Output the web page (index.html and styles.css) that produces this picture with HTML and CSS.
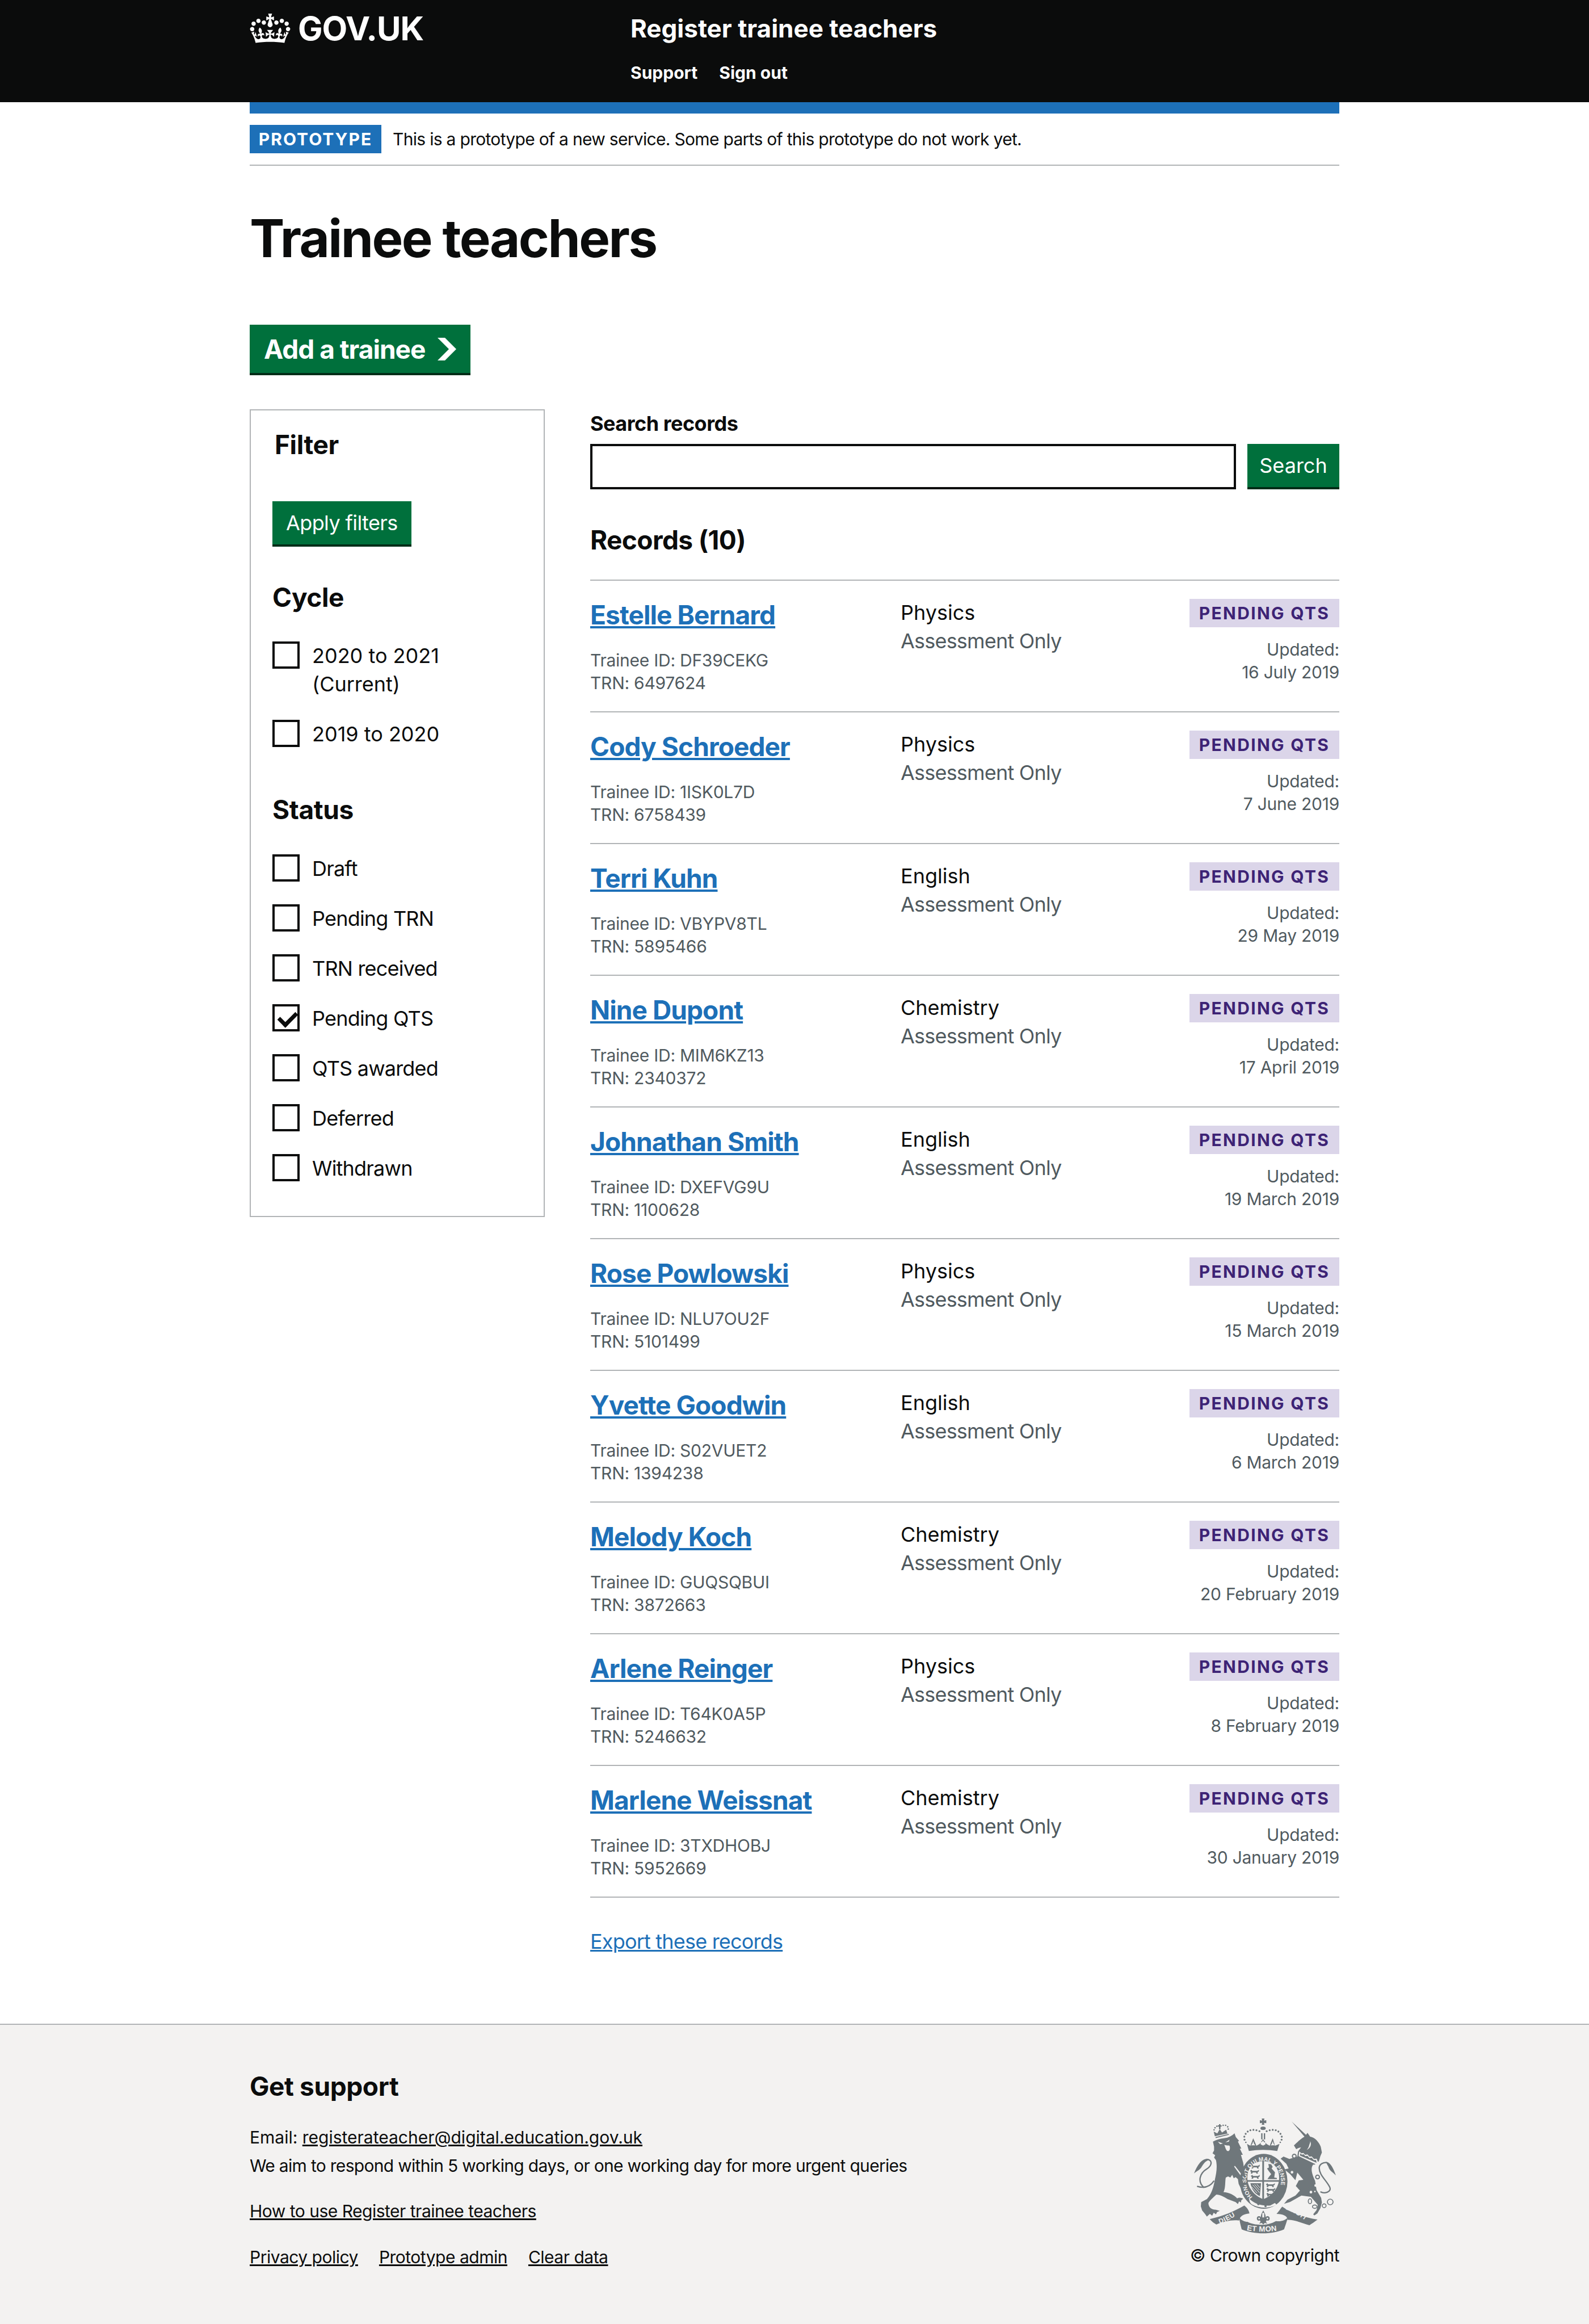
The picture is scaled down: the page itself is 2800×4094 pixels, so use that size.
FILE: index.html
```html
<!DOCTYPE html>
<html lang="en">
<head>
    <meta charset="UTF-8">
    <title>Trainee teachers - Register trainee teachers</title>
    <link rel="stylesheet" href="styles.css">
</head>
<body>
    <header class="header">
        <div class="container header_inner">
            <a class="logo" href="#">
                <svg class="crown" viewBox="0 0 132 97"><path fill="currentColor" fill-rule="evenodd" d="M25 30.2c3.5 1.5 7.7-.2 9.1-3.7 1.5-3.6-.2-7.8-3.9-9.2-3.6-1.4-7.6.3-9.1 3.9-1.4 3.5.3 7.5 3.9 9zM9 39.5c3.6 1.5 7.8-.2 9.2-3.7 1.5-3.6-.2-7.8-3.9-9.1-3.6-1.5-7.6.2-9.1 3.8-1.4 3.5.3 7.5 3.8 9zM4.4 57.2c3.5 1.5 7.7-.2 9.1-3.8 1.5-3.6-.2-7.7-3.9-9.1-3.5-1.5-7.6.3-9.1 3.8-1.4 3.5.3 7.6 3.9 9.1zm38.3-21.4c3.5 1.5 7.7-.2 9.1-3.8 1.5-3.6-.2-7.7-3.9-9.1-3.6-1.5-7.6.3-9.1 3.8-1.3 3.6.4 7.7 3.9 9.1zm64.4-5.6c-3.6 1.5-7.8-.2-9.1-3.7-1.5-3.6.2-7.8 3.8-9.2 3.6-1.4 7.7.3 9.2 3.9 1.3 3.5-.4 7.5-3.9 9zm15.9 9.3c-3.6 1.5-7.7-.2-9.1-3.7-1.5-3.6.2-7.8 3.7-9.1 3.6-1.5 7.7.2 9.2 3.8 1.5 3.5-.3 7.5-3.8 9zm4.7 17.7c-3.6 1.5-7.8-.2-9.2-3.8-1.5-3.6.2-7.7 3.9-9.1 3.6-1.5 7.7.3 9.2 3.8 1.3 3.5-.4 7.6-3.9 9.1zM89.3 35.8c-3.6 1.5-7.8-.2-9.2-3.8-1.4-3.6.2-7.7 3.9-9.1 3.6-1.5 7.7.3 9.2 3.8 1.4 3.6-.3 7.7-3.9 9.1zM69.7 17.7l8.9 4.7V9.3l-8.9 2.8c-.2-.3-.5-.6-.9-.9L72.4 0H59.6l3.5 11.2c-.3.3-.6.5-.9.9l-8.8-2.8v13.1l8.8-4.7c.3.3.6.7.9.9l-5 15.4v.1c-.2.8-.4 1.6-.4 2.4 0 4.1 3.1 7.5 7 8.1h.2c.3 0 .7.1 1 .1.4 0 .7 0 1-.1h.2c4-.6 7.1-4.1 7.1-8.1 0-.8-.1-1.7-.4-2.4V34l-5.1-15.4c.4-.2.7-.6 1-.9zM66 92.8c16.9 0 32.8 1.1 47.1 3.2 4-16.9 8.9-26.7 14-33.5l-9.6-3.4c1 4.9 1.1 7.2 0 10.2-1.5-1.4-3-4.3-4.2-8.7L108.6 76c2.8-2 5-3.2 7.5-3.3-4.4 9.4-10 11.9-13.6 11.2-4.3-.8-6.3-4.6-5.6-7.9 1-4.7 5.7-5.9 8-.5 4.3-8.7-3-11.4-7.6-8.8 7.1-7.2 7.9-13.5 2.1-21.1-8 6.1-8.1 12.3-4.5 20.8-4.7-5.4-12.1-2.5-9.5 6.2 3.4-5.2 7.9-2 7.2 3.1-.6 4.3-6.4 7.8-13.5 7.2-10.3-.9-10.9-8-11.2-13.8 2.5-.5 7.1 1.8 11 7.3L80.2 60c-4.1 4.4-8 5.3-12.3 5.4 1.4-4.4 8-11.6 8-11.6H55.5s6.4 7.2 7.9 11.6c-4.2-.1-8-1-12.3-5.4l1.4 16.4c3.9-5.5 8.5-7.7 10.9-7.3-.3 5.8-.9 12.8-11.1 13.8-7.2.6-12.9-2.9-13.5-7.2-.7-5 3.8-8.3 7.1-3.1 2.7-8.7-4.6-11.6-9.4-6.2 3.7-8.5 3.6-14.7-4.6-20.8-5.8 7.6-5 13.9 2.2 21.1-4.7-2.6-11.9.1-7.7 8.8 2.3-5.5 7.1-4.2 8.1.5.7 3.3-1.3 7.1-5.7 7.9-3.5.7-9-1.8-13.5-11.2 2.5.1 4.7 1.3 7.5 3.3l-4.7-15.4c-1.2 4.4-2.7 7.2-4.3 8.7-1.1-3-.9-5.3 0-10.2l-9.5 3.4c5 6.9 9.9 16.7 14 33.5 14.8-2.1 30.8-3.2 47.7-3.2z"/></svg>
                <span>GOV.UK</span>
            </a>
            <div class="service">
                <a class="service_name" href="#">Register trainee teachers</a>
                <nav class="service_nav">
                    <a href="#">Support</a>
                    <a href="#">Sign out</a>
                </nav>
            </div>
        </div>
    </header>

    <div class="container">
        <div class="blue_bar"></div>
        <div class="phase">
            <strong class="phase_tag">PROTOTYPE</strong>
            <span class="phase_text">This is a prototype of a new service. Some parts of this prototype do not work yet.</span>
        </div>

        <h1 class="title">Trainee teachers</h1>

        <a class="btn btn_start" href="#">Add a trainee
            <svg class="chevron" viewBox="0 0 33 40"><path fill="currentColor" d="M0 0h13l20 20-20 20H0l20-20z"/></svg>
        </a>

        <div class="columns">
            <!-- filter -->
            <aside class="filter">
                <h2 class="filter_title">Filter</h2>
                <a class="btn btn_apply" href="#">Apply filters</a>

                <h3 class="filter_group">Cycle</h3>
                <ul class="checks">
                    <li><span class="box"></span><span class="check_label check_years">2020 to 2021 (Current)</span></li>
                    <li><span class="box"></span><span class="check_label check_years">2019 to 2020</span></li>
                </ul>

                <h3 class="filter_group filter_status">Status</h3>
                <ul class="checks">
                    <li><span class="box"></span><span class="check_label">Draft</span></li>
                    <li><span class="box"></span><span class="check_label">Pending TRN</span></li>
                    <li><span class="box"></span><span class="check_label">TRN received</span></li>
                    <li><span class="box checked"></span><span class="check_label">Pending QTS</span></li>
                    <li><span class="box"></span><span class="check_label">QTS awarded</span></li>
                    <li><span class="box"></span><span class="check_label">Deferred</span></li>
                    <li><span class="box"></span><span class="check_label">Withdrawn</span></li>
                </ul>
            </aside>

            <!-- records -->
            <main class="records">
                <label class="search_label" for="search">Search records</label>
                <div class="search_row">
                    <input class="search_input" id="search" type="text">
                    <a class="btn btn_search" href="#">Search</a>
                </div>
                <h2 class="records_title">Records (10)</h2>

                <div class="record">
                    <div class="record_who">
                        <a class="record_name" href="#">Estelle Bernard</a>
                        <p class="record_ids">Trainee ID: DF39CEKG<br>TRN: 6497624</p>
                    </div>
                    <div class="record_course">Physics<span>Assessment Only</span></div>
                    <div class="record_status">
                        <strong class="tag">PENDING QTS</strong>
                        <p class="record_date">Updated:<br>16 July 2019</p>
                    </div>
                </div>
                <div class="record">
                    <div class="record_who">
                        <a class="record_name" href="#">Cody Schroeder</a>
                        <p class="record_ids">Trainee ID: 1ISK0L7D<br>TRN: 6758439</p>
                    </div>
                    <div class="record_course">Physics<span>Assessment Only</span></div>
                    <div class="record_status">
                        <strong class="tag">PENDING QTS</strong>
                        <p class="record_date">Updated:<br>7 June 2019</p>
                    </div>
                </div>
                <div class="record">
                    <div class="record_who">
                        <a class="record_name" href="#">Terri Kuhn</a>
                        <p class="record_ids">Trainee ID: VBYPV8TL<br>TRN: 5895466</p>
                    </div>
                    <div class="record_course">English<span>Assessment Only</span></div>
                    <div class="record_status">
                        <strong class="tag">PENDING QTS</strong>
                        <p class="record_date">Updated:<br>29 May 2019</p>
                    </div>
                </div>
                <div class="record">
                    <div class="record_who">
                        <a class="record_name" href="#">Nine Dupont</a>
                        <p class="record_ids">Trainee ID: MIM6KZ13<br>TRN: 2340372</p>
                    </div>
                    <div class="record_course">Chemistry<span>Assessment Only</span></div>
                    <div class="record_status">
                        <strong class="tag">PENDING QTS</strong>
                        <p class="record_date">Updated:<br>17 April 2019</p>
                    </div>
                </div>
                <div class="record">
                    <div class="record_who">
                        <a class="record_name" href="#">Johnathan Smith</a>
                        <p class="record_ids">Trainee ID: DXEFVG9U<br>TRN: 1100628</p>
                    </div>
                    <div class="record_course">English<span>Assessment Only</span></div>
                    <div class="record_status">
                        <strong class="tag">PENDING QTS</strong>
                        <p class="record_date">Updated:<br>19 March 2019</p>
                    </div>
                </div>
                <div class="record">
                    <div class="record_who">
                        <a class="record_name" href="#">Rose Powlowski</a>
                        <p class="record_ids">Trainee ID: NLU7OU2F<br>TRN: 5101499</p>
                    </div>
                    <div class="record_course">Physics<span>Assessment Only</span></div>
                    <div class="record_status">
                        <strong class="tag">PENDING QTS</strong>
                        <p class="record_date">Updated:<br>15 March 2019</p>
                    </div>
                </div>
                <div class="record">
                    <div class="record_who">
                        <a class="record_name" href="#">Yvette Goodwin</a>
                        <p class="record_ids">Trainee ID: S02VUET2<br>TRN: 1394238</p>
                    </div>
                    <div class="record_course">English<span>Assessment Only</span></div>
                    <div class="record_status">
                        <strong class="tag">PENDING QTS</strong>
                        <p class="record_date">Updated:<br>6 March 2019</p>
                    </div>
                </div>
                <div class="record">
                    <div class="record_who">
                        <a class="record_name" href="#">Melody Koch</a>
                        <p class="record_ids">Trainee ID: GUQSQBUI<br>TRN: 3872663</p>
                    </div>
                    <div class="record_course">Chemistry<span>Assessment Only</span></div>
                    <div class="record_status">
                        <strong class="tag">PENDING QTS</strong>
                        <p class="record_date">Updated:<br>20 February 2019</p>
                    </div>
                </div>
                <div class="record">
                    <div class="record_who">
                        <a class="record_name" href="#">Arlene Reinger</a>
                        <p class="record_ids">Trainee ID: T64K0A5P<br>TRN: 5246632</p>
                    </div>
                    <div class="record_course">Physics<span>Assessment Only</span></div>
                    <div class="record_status">
                        <strong class="tag">PENDING QTS</strong>
                        <p class="record_date">Updated:<br>8 February 2019</p>
                    </div>
                </div>
                <div class="record">
                    <div class="record_who">
                        <a class="record_name" href="#">Marlene Weissnat</a>
                        <p class="record_ids">Trainee ID: 3TXDHOBJ<br>TRN: 5952669</p>
                    </div>
                    <div class="record_course">Chemistry<span>Assessment Only</span></div>
                    <div class="record_status">
                        <strong class="tag">PENDING QTS</strong>
                        <p class="record_date">Updated:<br>30 January 2019</p>
                    </div>
                </div>

                <a class="export" href="#">Export these records</a>
            </main>
        </div>
    </div>

    <footer class="footer">
        <div class="container footer_inner">
            <div class="footer_left">
                <h2 class="footer_title">Get support</h2>
                <p class="footer_text">Email: <a href="#">registerateacher@digital.education.gov.uk</a><br><span class="footer_aim">We aim to respond within 5 working days, or one working day for more urgent queries</span></p>
                <p class="footer_howto"><a href="#">How to use Register trainee teachers</a></p>
                <div class="footer_links">
                    <a href="#">Privacy policy</a>
                    <a href="#">Prototype admin</a>
                    <a href="#">Clear data</a>
                </div>
            </div>
            <div class="footer_right">
                <svg class="crest" viewBox="0 0 771 630">
                    <defs>
                        <path id="garterRing" d="M321 421A92 108 0 1 1 439 421"/>
                        <path id="ribbonLeft" d="M148 562Q205 542 258 502"/>
                        <path id="ribbonMid" d="M290 596Q377 612 472 596"/>
                        <path id="ribbonRight" d="M495 486Q555 505 620 562"/>
                        <path id="passant" d="M0 6L8 0L12 6H38L48 0L46 10L40 12L42 20H34L32 14H14L12 20H4L6 12Z"/>
                    </defs>

                    <!-- royal crown -->
                    <g fill="#6f777b">
                        <path d="M370 6h14l-2 11 12-2v16l-12-2 2 10h-14l2-10-12 2V15l12 2z"/>
                        <ellipse cx="377" cy="58" rx="14" ry="9"/>
                        <path d="M367 84h7v32h-7zM381 84h7v32h-7z"/>
                        <path d="M292 140C296 155 298 165 302 178C350 170 405 170 452 178C456 165 458 155 464 140L440 150L428 110L412 150L395 140L377 115L359 140L342 150L325 110L310 150Z"/>
                        <circle cx="358" cy="73" r="5"/><circle cx="342" cy="68" r="5"/><circle cx="326" cy="66" r="5"/><circle cx="310" cy="68" r="5"/><circle cx="296" cy="75" r="5"/><circle cx="285" cy="87" r="5"/><circle cx="278" cy="102" r="5"/><circle cx="279" cy="118" r="5"/><circle cx="286" cy="132" r="4"/>
                        <circle cx="396" cy="73" r="5"/><circle cx="412" cy="68" r="5"/><circle cx="428" cy="66" r="5"/><circle cx="444" cy="68" r="5"/><circle cx="458" cy="75" r="5"/><circle cx="469" cy="87" r="5"/><circle cx="476" cy="102" r="5"/><circle cx="475" cy="118" r="5"/><circle cx="468" cy="132" r="4"/>
                    </g>
                    <g fill="#f3f2f1">
                        <path d="M377 122l6 10 8-1-2 12-12 6-12-6-2-12 8-1z"/>
                        <path d="M325 126l5 14 6 8h-22l6-8zM428 126l5 14 6 8h-22l6-8z"/>
                    </g>

                    <!-- garter and shield -->
                    <ellipse cx="380" cy="338" rx="126" ry="145" fill="#6f777b"/>
                    <path fill="#f3f2f1" d="M378 232C430 232 462 265 462 320C462 370 425 415 378 432C331 415 294 370 294 320C294 265 326 232 378 232Z"/>
                    <g fill="#6f777b">
                        <use href="#passant" x="312" y="250"/>
                        <use href="#passant" x="308" y="277"/>
                        <use href="#passant" x="312" y="304"/>
                        <use href="#passant" x="392" y="348"/>
                        <use href="#passant" x="394" y="373"/>
                        <use href="#passant" x="394" y="398"/>
                        <path d="M405 246L420 248L428 262L422 270L440 290L436 318L450 320V326H400L410 312L420 300L408 285L398 270L408 265Z"/>
                        <path d="M310 348H366L360 416C335 405 318 385 310 348Z"/>
                        <rect x="373" y="230" width="9" height="204"/>
                        <rect x="292" y="332" width="172" height="8"/>
                    </g>
                    <path fill="none" stroke="#f3f2f1" stroke-width="3" d="M322 356L358 398M332 354L358 384M344 353L360 372M316 366L346 400"/>
                    <path fill="#f3f2f1" d="M303 428C325 452 365 470 415 466L440 452L448 462C410 482 360 482 322 462C310 455 304 445 303 428Z"/>
                    <circle cx="352" cy="458" r="6" fill="#6f777b"/><circle cx="390" cy="469" r="6" fill="#6f777b"/>
                    <text class="crest_text"><textPath href="#garterRing">HONI SOIT QUI MAL Y PENSE</textPath></text>

                    <g fill="#6f777b">
                        <!-- lion -->
                        <path d="M112 128C130 118 150 112 170 110C195 108 212 98 226 84L233 104L250 124L244 128L262 165L254 165L270 198L260 198L272 240C276 270 280 290 282 312L272 312L228 256L224 260L262 312L268 332L278 362L258 372L248 352L244 326L232 316L222 322L214 304L204 318L192 312L180 318C175 340 180 370 168 395C195 395 225 410 240 428C250 422 262 424 272 430L262 438L260 450L250 444L244 458L232 448L190 432C170 420 150 408 130 408C112 425 96 438 88 452C88 475 105 488 128 488L148 494L134 500L128 512L116 504L108 520L96 510L80 524L70 510L55 492L48 470L50 448L80 432C105 405 115 370 122 330C130 295 136 262 128 226L118 212L124 200L110 190L118 175L118 155Z"/>
                        <path d="M122 100L116 75L135 85L148 62L160 80L182 65L188 85L194 85Z"/>
                        <path d="M144 36h8v6h6v7h-6v13h-8V49h-6v-7h6z"/>
                        <circle cx="118" cy="66" r="4"/><circle cx="123" cy="55" r="4"/><circle cx="133" cy="47" r="4"/><circle cx="166" cy="42" r="4"/><circle cx="179" cy="42" r="4"/><circle cx="190" cy="50" r="4"/><circle cx="193" cy="62" r="4"/>
                        <path fill="none" stroke="#6f777b" stroke-width="5" d="M126 107L196 90"/>
                        <path fill="none" stroke="#6f777b" stroke-width="7" d="M118 335C100 362 70 378 28 364M66 372C28 340 42 295 80 272C108 255 112 222 78 222"/>
                        <path d="M84 219C55 216 30 250 12 296C30 282 45 276 52 262C60 248 72 232 84 228Z"/>
                        <!-- unicorn -->
                        <path d="M528 22L604 92L612 82L626 102C650 105 672 130 682 155L688 186L680 205L672 232L650 250L642 250C626 270 636 300 652 335L660 385L684 425L688 450L680 480L664 508L648 518L642 512L660 490L666 462L630 420L580 413L520 447L488 457L506 435L548 413L572 387L550 363L566 333L590 330L558 292L548 332L520 300L490 275L512 270L500 245L470 218L485 207L516 220L558 208L562 180L578 158L564 162L552 168L540 148C555 134 575 114 596 102Z"/>
                        <path fill="none" stroke="#6f777b" stroke-width="7" d="M680 393C700 405 740 395 730 370C715 335 672 305 674 265C676 247 695 237 712 239"/>
                        <path d="M708 235C735 235 750 275 762 307C740 283 730 285 722 260Z"/>
                        <!-- ribbon -->
                        <path d="M95 538C165 522 225 497 278 466C292 478 302 490 305 508C275 510 255 522 250 545C210 540 170 550 130 566C118 560 105 550 95 538Z"/>
                        <path d="M448 510C458 500 468 485 478 472C525 505 600 530 665 540C650 552 635 562 622 570C585 560 545 540 505 542C510 525 485 510 448 510Z"/>
                        <path d="M250 528C253 548 258 570 264 592C330 620 425 620 488 592C495 570 503 550 508 528C495 545 470 552 445 548C400 575 330 572 295 552C280 552 262 545 250 528Z"/>
                        <!-- fleur -->
                        <path d="M378 492C385 505 392 515 390 528C398 518 412 522 412 534C412 546 402 548 396 544L392 552L400 562L386 558L378 566L370 558L356 562L364 552L360 544C354 548 344 546 344 534C344 522 358 518 366 528C364 515 371 505 378 492Z"/>
                    </g>
                    <!-- lion face, unicorn collar and spots -->
                    <g fill="#f3f2f1">
                        <path d="M138 128L165 138L150 142ZM200 118L178 132L196 128ZM172 145C180 150 195 148 200 150C205 165 200 180 190 178C182 178 178 160 172 145Z"/>
                        <path d="M568 180L580 190L590 188L600 198L612 196L622 208L634 206L646 220L660 218L668 236L660 250L565 205Z"/>
                        <path d="M620 150C622 140 628 132 626 125C634 140 630 160 608 172C614 165 618 158 620 150Z"/>
                        <circle cx="655" cy="360" r="7"/><circle cx="630" cy="395" r="7"/><circle cx="651" cy="392" r="4"/>
                        <path d="M373 505h10v24h-10zM352 530h8v8h-8zM396 530h8v8h-8z"/>
                    </g>
                    <path fill="#6f777b" d="M574 190L582 197L592 195L600 205L612 203L622 215L634 213L645 226L657 226L660 240L572 202Z"/>
                    <g fill="#f3f2f1" stroke="#6f777b" stroke-width="6">
                        <circle cx="542" cy="205" r="10"/><circle cx="530" cy="290" r="10"/><circle cx="665" cy="315" r="10"/>
                    </g>
                    <g fill="none" stroke="#6f777b" stroke-width="5">
                        <ellipse cx="625" cy="443" rx="9" ry="13"/><ellipse cx="650" cy="472" rx="12" ry="9"/><circle cx="700" cy="467" r="10"/><circle cx="732" cy="447" r="15"/>
                    </g>
                    <text class="crest_ribbon"><textPath href="#ribbonLeft">DIEU</textPath></text>
                    <text class="crest_ribbon crest_mid"><textPath href="#ribbonMid">ET MON</textPath></text>
                    <text class="crest_ribbon"><textPath href="#ribbonRight">DROIT</textPath></text>
                </svg>
                <a class="copyright" href="#">© Crown copyright</a>
            </div>
        </div>
    </footer>
</body>
</html>
```

FILE: styles.css
```css
*{
    margin: 0;
    padding: 0;
    box-sizing: border-box;
}
body{
    font-family: "Inter", "Liberation Sans", sans-serif;
    font-size: 36px;
    line-height: 50px;
    color: #0b0c0c;
    background: #fff;
}
li{
    list-style: none;
}
a{
    color: inherit;
}
.container{
    width: 1920px;
    margin: 0 auto;
}

/* header */
.header{
    height: 180px;
    background: #0b0c0c;
    color: #fff;
}
.header a{
    color: #fff;
    text-decoration: none;
    font-weight: 700;
}
.header_inner{
    display: flex;
}
.logo{
    width: 671px;
    height: 100px;
    display: flex;
    align-items: center;
    gap: 13px;
    font-size: 58px;
    letter-spacing: -1px;
}
.crown{
    width: 72px;
    height: 52px;
}
.service_name{
    display: block;
    padding-top: 25px;
    font-size: 44px;
    line-height: 50px;
}
.service_nav{
    display: flex;
    gap: 38px;
    margin-top: 33px;
    font-size: 30px;
    line-height: 40px;
}

/* phase banner */
.blue_bar{
    height: 20px;
    background: #1d70b8;
}
.phase{
    display: flex;
    align-items: center;
    gap: 20px;
    height: 92px;
    padding-top: 20px;
    padding-bottom: 20px;
    border-bottom: 2px solid #b1b4b6;
    font-size: 30px;
    line-height: 50px;
}
.phase_text{
    letter-spacing: -0.7px;
}
.phase_tag{
    width: 232px;
    height: 50px;
    background: #1d70b8;
    color: #fff;
    text-align: center;
    font-size: 30px;
    letter-spacing: 2px;
}

.title{
    margin-top: 78px;
    font-size: 92px;
    line-height: 100px;
    font-weight: 700;
    letter-spacing: -2.5px;
}

/* buttons */
.btn{
    display: inline-flex;
    align-items: center;
    background: #00703c;
    color: #fff;
    text-decoration: none;
    box-shadow: 0 4px 0 #002d18;
}
.btn_start{
    height: 85px;
    margin-top: 102px;
    padding: 0 25px;
    gap: 22px;
    font-size: 46px;
    font-weight: 700;
    letter-spacing: -1px;
}
.chevron{
    width: 33px;
    height: 40px;
}
.btn_apply{
    height: 76px;
    margin-top: 70px;
    padding: 0 24px;
    letter-spacing: -0.6px;
}
.btn_search{
    height: 76px;
    width: 162px;
    justify-content: center;
}

.columns{
    display: flex;
    gap: 80px;
    align-items: flex-start;
    margin-top: 64px;
}

/* filter */
.filter{
    width: 520px;
    height: 1423px;
    padding: 30px 38px;
    border: 2px solid #b1b4b6;
}
.filter_title{
    font-size: 46px;
    line-height: 60px;
    margin-left: 4px;
    letter-spacing: -0.4px;
}
.filter_group{
    margin-top: 63px;
    font-size: 46px;
    line-height: 60px;
    letter-spacing: -0.4px;
}
.filter_status{
    margin-top: 78px;
}
.checks{
    margin-top: 48px;
    display: flex;
    flex-direction: column;
    gap: 38px;
}
.filter_status + .checks{
    margin-top: 49px;
}
.checks li{
    display: flex;
    align-items: flex-start;
    min-height: 50px;
}
.box{
    position: relative;
    flex: none;
    width: 48px;
    height: 48px;
    border: 4px solid #0b0c0c;
    margin-right: 22px;
}
.box.checked::after{
    content: "";
    position: absolute;
    left: 7px;
    top: 9px;
    width: 25px;
    height: 13px;
    border-left: 7px solid #0b0c0c;
    border-bottom: 7px solid #0b0c0c;
    transform: rotate(-45deg);
}
.check_label{
    width: 280px;
    font-size: 36px;
    letter-spacing: -0.8px;
}
.check_years{
    letter-spacing: 0;
}

/* records */
.records{
    width: 1320px;
}
.search_label{
    display: block;
    font-weight: 700;
    font-size: 36px;
    line-height: 50px;
    letter-spacing: -0.5px;
}
.search_row{
    display: flex;
    align-items: flex-start;
    gap: 20px;
    margin-top: 11px;
}
.search_input{
    width: 1138px;
    height: 80px;
    border: 4px solid #0b0c0c;
    background: #fff;
}
.records_title{
    margin-top: 59px;
    font-size: 46px;
    line-height: 60px;
    margin-bottom: 40px;
    letter-spacing: -0.6px;
}
.record{
    display: flex;
    height: 232px;
    padding-top: 30px;
    border-top: 2px solid #b1b4b6;
}
.record:last-of-type{
    height: 234px;
    border-bottom: 2px solid #b1b4b6;
}
.record_who{
    width: 547px;
}
.record_name{
    color: #1d70b8;
    font-size: 46px;
    font-weight: 700;
    line-height: 60px;
    letter-spacing: -0.9px;
    text-decoration-thickness: 4px;
    text-underline-offset: 3px;
}
.record_ids{
    margin-top: 30px;
    font-size: 30px;
    line-height: 40px;
    letter-spacing: -0.25px;
    color: #505a5f;
}
.record_course{
    width: 420px;
    margin-top: 1px;
    font-size: 36px;
    line-height: 50px;
}
.record_course span{
    display: block;
    color: #505a5f;
    letter-spacing: -0.8px;
}
.record_status{
    flex: 1;
    text-align: right;
}
.tag{
    display: inline-block;
    height: 50px;
    width: 264px;
    text-align: center;
    background: #dbd5e9;
    color: #3d2375;
    font-size: 30px;
    letter-spacing: 2.3px;
    line-height: 50px;
}
.record_date{
    margin-top: 19px;
    font-size: 30px;
    line-height: 40px;
    letter-spacing: -0.25px;
    color: #505a5f;
}
.export{
    display: inline-block;
    margin-top: 52px;
    color: #1d70b8;
    font-size: 36px;
    letter-spacing: -0.8px;
}

/* footer */
.footer{
    margin-top: 120px;
    height: 529px;
    background: #f3f2f1;
    border-top: 2px solid #b1b4b6;
}
.footer_inner{
    display: flex;
    justify-content: space-between;
}
.footer_title{
    margin-top: 78px;
    font-size: 46px;
    line-height: 60px;
    letter-spacing: -0.4px;
}
.footer_text{
    margin-top: 35px;
    font-size: 30px;
    line-height: 50px;
}
.footer_aim{
    letter-spacing: -0.7px;
}
.footer_howto{
    margin-top: 30px;
    font-size: 30px;
    line-height: 50px;
    letter-spacing: -0.5px;
}
.footer_links{
    display: flex;
    gap: 37px;
    margin-top: 31px;
    font-size: 30px;
    line-height: 50px;
    letter-spacing: -0.5px;
}
.footer_right{
    display: flex;
    flex-direction: column;
    align-items: flex-end;
}
.crest{
    display: block;
    width: 257px;
    height: 210px;
    margin-top: 163px;
    margin-right: 3px;
}
.crest_text{
    fill: #f3f2f1;
    font-family: "Liberation Sans", sans-serif;
    font-weight: 700;
    font-size: 30px;
}
.crest_ribbon{
    fill: #f3f2f1;
    font-family: "Liberation Sans", sans-serif;
    font-weight: 700;
    font-size: 36px;
    letter-spacing: 2px;
}
.crest_mid{
    font-size: 40px;
    letter-spacing: 1px;
}
.copyright{
    margin-top: 8px;
    font-size: 30px;
    letter-spacing: -0.5px;
    text-decoration: none;
    line-height: 50px;
}
```
